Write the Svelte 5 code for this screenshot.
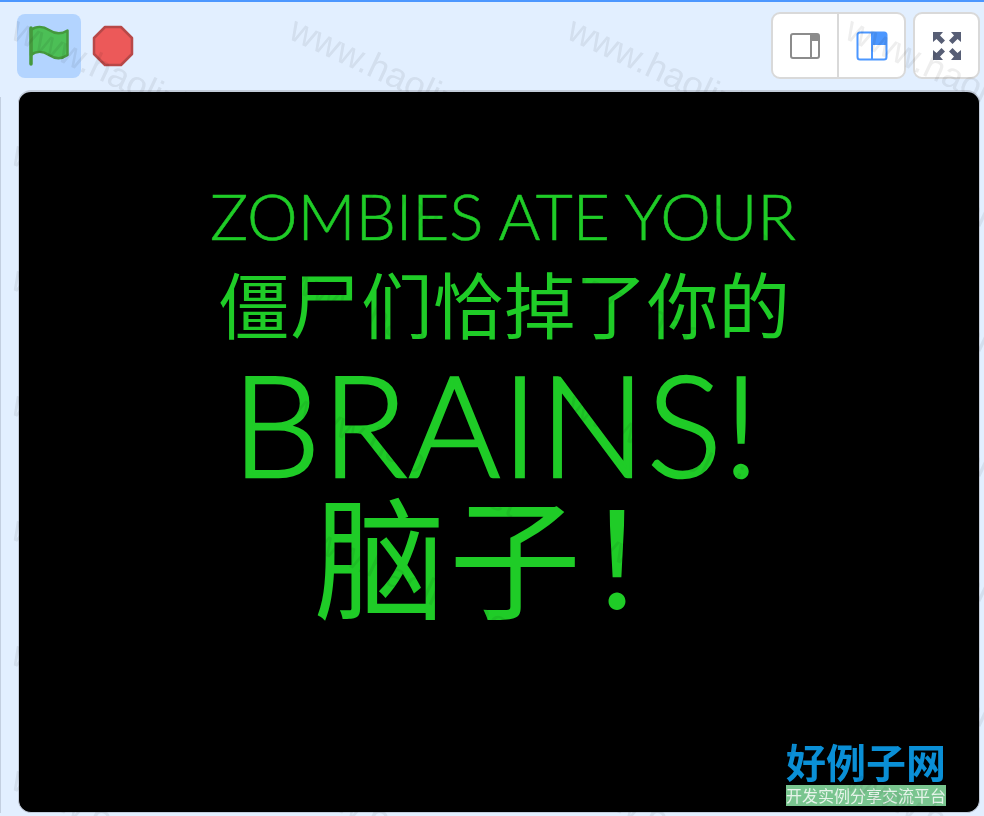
<script>
  const marks = [];
  for (let r = 0; r < 7; r++) for (let c = 0; c < 4; c++) marks.push({ x: 14 + c * 278, y: 6 + r * 125 });
</script>

<div class="page">
  <div class="topline"></div>
  <header class="bar">
    <div class="controls">
      <button class="flag" aria-label="Green flag">
        <svg width="64" height="64" viewBox="0 0 64 64">
          <path d="M14 16C19 12 26 12 32 16C38 20 45 20 50.500 16.500V41C45 45 38 45 32 41C26 37 19 37 14 41Z" fill="#4cbf56" stroke="#45993d" stroke-width="2.500" stroke-linejoin="round"/>
          <path d="M14 14V50" fill="none" stroke="#45993d" stroke-width="3.500" stroke-linecap="round"/>
        </svg>
      </button>
      <svg class="stop" width="42" height="42" viewBox="0 0 42 42" aria-label="Stop">
        <path d="M13 2H29L40 13V29L29 40H13L2 29V13Z" fill="#ec5959" stroke="#b84848" stroke-width="2.500" stroke-linejoin="round"/>
      </svg>
    </div>
    <div class="sizes">
      <div class="group">
        <button class="size" aria-label="Small stage">
          <svg width="32" height="28" viewBox="0 0 32 28">
            <rect x="2" y="2" width="28" height="24" rx="2" fill="#fff" stroke="#8c8c8c" stroke-width="2"/>
            <path d="M22 2H28A2 2 0 0 1 30 4V9H22Z" fill="#8c8c8c"/>
            <path d="M22 2V26" stroke="#8c8c8c" stroke-width="2"/>
          </svg>
        </button>
        <button class="size second" aria-label="Large stage">
          <svg width="32" height="30" viewBox="0 0 32 30">
            <rect x="1.500" y="1.500" width="29" height="27" rx="2.500" fill="#fff" stroke="#4c97ff" stroke-width="2"/>
            <path d="M16 1.500H28A2.500 2.500 0 0 1 30.500 4V14H16Z" fill="#4c97ff"/>
            <path d="M16 1.500V28.500" stroke="#4c97ff" stroke-width="2"/>
          </svg>
        </button>
      </div>
      <button class="full" aria-label="Full screen">
        <svg width="30" height="30" viewBox="0 0 30 30" fill="#575e75">
          <path d="M1 1H11L8 4.500L13 9.500L9.500 13L4.500 8L1 11Z"/>
          <path d="M29 1H19L22 4.500L17 9.500L20.500 13L25.500 8L29 11Z"/>
          <path d="M1 29H11L8 25.500L13 20.500L9.500 17L4.500 22L1 19Z"/>
          <path d="M29 29H19L22 25.500L17 20.500L20.500 17L25.500 22L29 19Z"/>
        </svg>
      </button>
    </div>
  </header>

  <main class="body">
    <div class="edge"></div>
    <section class="stage">
      <div class="l1">ZOMBIES ATE YOUR</div>
      <div class="l2">僵尸们恰掉了你的</div>
      <div class="l3">BRAINS!</div>
      <div class="l4">脑子！</div>
      <div class="logo">
        <div class="logo-name">好例子网</div>
        <div class="logo-sub">开发实例分享交流平台</div>
      </div>
    </section>
  </main>

  <div class="marks" aria-hidden="true">
    {#each marks as m}
      <span class="mark" style="left:{m.x}px;top:{m.y}px">www.haolizi.net</span>
    {/each}
  </div>
</div>

<style>
  :global(body) { margin: 0; background: #e2efff; }
  .page { position: relative; width: 984px; height: 816px; overflow: hidden; background: #e2efff; font-family: "Noto Sans CJK SC", sans-serif; }
  .topline { height: 2px; background: #4c97ff; }
  .bar { display: flex; justify-content: space-between; height: 76px; padding: 10px 4px 0 17px; box-sizing: border-box; }
  .controls { display: flex; align-items: flex-start; gap: 11px; padding-top: 2px; }
  button { padding: 0; margin: 0; border: 0; background: none; display: flex; align-items: center; justify-content: center; }
  .flag { width: 64px; height: 64px; border-radius: 8px; background: #b3d4ff; }
  .stop { margin-top: 11px; }
  .sizes { display: flex; gap: 7px; }
  .group { display: flex; height: 67px; box-sizing: border-box; border: 2px solid #d9d9d9; border-radius: 9px; background: #fff; }
  .size { width: 64px; height: 63px; }
  .size.second { width: 67px; border-left: 2px solid #d9d9d9; }
  .full { width: 67px; height: 67px; box-sizing: border-box; border: 2px solid #d9d9d9; border-radius: 9px; background: #fff; }
  .body { position: relative; padding: 12px 4px 0 18px; }
  .edge { position: absolute; left: 0; top: 19px; width: 1px; bottom: 0; background: #c3cfe0; }
  .stage { position: relative; width: 962px; height: 723px; box-sizing: border-box; background: #000; border: 1px solid #c3ccda; border-top-width: 2px; border-radius: 13px; color: #1fcc27; overflow: hidden; display: flex; flex-direction: column; }
  .l1 { margin: 91px 0 0 191px; height: 65px; line-height: 65px; font-family: "Lato", sans-serif; font-weight: 300; font-size: 64px; letter-spacing: -0.15px; -webkit-text-stroke: 0.6px #1fcc27; white-space: nowrap; }
  .l2 { margin: 11px 0 0 199px; height: 86px; line-height: 86px; font-size: 71.500px; white-space: nowrap; }
  .l3 { margin: 13px 0 0 213px; height: 130px; line-height: 130px; font-family: "Lato", sans-serif; font-weight: 300; font-size: 140px; letter-spacing: 1.500px; -webkit-text-stroke: 2.500px #1fcc27; white-space: nowrap; }
  .l4 { margin: -11px 0 0 295px; height: 150px; line-height: 150px; font-size: 132px; letter-spacing: 3px; white-space: nowrap; }
  .logo { position: absolute; left: 767px; top: 648px; width: 160px; }
  .logo-name { height: 42px; line-height: 42px; font-size: 40px; font-weight: 700; color: #0a8fd6; white-space: nowrap; }
  .logo-sub { margin-top: 3px; height: 21px; line-height: 21px; background: #79c58f; color: #e6f4ea; font-size: 16px; white-space: nowrap; text-align: center; }
  .marks { position: absolute; inset: 0; pointer-events: none; overflow: hidden; mix-blend-mode: multiply; }
  .mark { position: absolute; font-family: "Liberation Sans", sans-serif; font-size: 36px; color: #eeeeee; transform: rotate(25deg); transform-origin: 0 50%; white-space: nowrap; }
</style>
